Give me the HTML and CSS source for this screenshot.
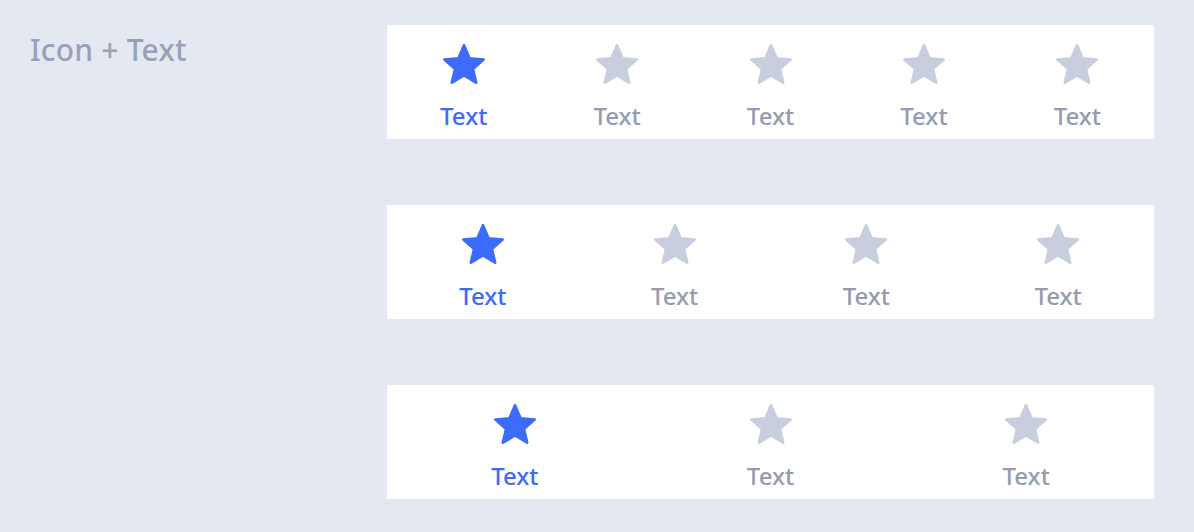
FILE: index.html
```html
<!DOCTYPE html>
<html>
<head>
<meta charset="utf-8">
<link rel="stylesheet" href="styles.css">
</head>
<body>
<svg width="0" height="0" class="defs">
  <defs>
    <symbol id="star" viewBox="1.3 1.3 21.4 20.4">
      <path d="M12 17.27L18.18 21l-1.64-7.03L22 9.24l-7.19-.61L12 2 9.19 8.63 2 9.24l5.46 4.73L5.82 21z" stroke-width="1.4" stroke-linejoin="round"/>
    </symbol>
  </defs>
</svg>
<main class="page">
  <div class="label">Icon + Text</div>
  <div class="bars">
    <nav class="bar">
      <div class="tab active"><svg class="icon"><use href="#star"/></svg><span>Text</span></div>
      <div class="tab"><svg class="icon"><use href="#star"/></svg><span>Text</span></div>
      <div class="tab"><svg class="icon"><use href="#star"/></svg><span>Text</span></div>
      <div class="tab"><svg class="icon"><use href="#star"/></svg><span>Text</span></div>
      <div class="tab"><svg class="icon"><use href="#star"/></svg><span>Text</span></div>
    </nav>
    <nav class="bar">
      <div class="tab active"><svg class="icon"><use href="#star"/></svg><span>Text</span></div>
      <div class="tab"><svg class="icon"><use href="#star"/></svg><span>Text</span></div>
      <div class="tab"><svg class="icon"><use href="#star"/></svg><span>Text</span></div>
      <div class="tab"><svg class="icon"><use href="#star"/></svg><span>Text</span></div>
    </nav>
    <nav class="bar">
      <div class="tab active"><svg class="icon"><use href="#star"/></svg><span>Text</span></div>
      <div class="tab"><svg class="icon"><use href="#star"/></svg><span>Text</span></div>
      <div class="tab"><svg class="icon"><use href="#star"/></svg><span>Text</span></div>
    </nav>
  </div>
</main>
</body>
</html>
```
FILE: styles.css
```css
html, body {
  margin: 0;
  padding: 0;
  background: #e4e8f1;
  font-family: "Noto Sans", "Open Sans", sans-serif;
}
.defs {
  position: absolute;
  width: 0;
  height: 0;
}
.page {
  display: flex;
  padding: 25px 40px 0 30px;
}
.label {
  width: 357px;
  flex: none;
  margin-top: 5px;
  font-size: 30px;
  line-height: 40px;
  font-weight: 500;
  letter-spacing: 0.2px;
  color: #99a1b7;
}
.bars {
  flex: 1;
  display: flex;
  flex-direction: column;
  gap: 66px;
}
.bar {
  height: 114px;
  box-sizing: border-box;
  background: #ffffff;
  display: flex;
  padding-top: 19px;
}
.tab {
  flex: 1;
  display: flex;
  flex-direction: column;
  align-items: center;
  color: #949bb2;
  fill: #c8cedd;
  stroke: #c8cedd;
}
.tab.active {
  color: #3d6bfb;
  fill: #3d6bfb;
  stroke: #3d6bfb;
}
.icon {
  width: 42px;
  height: 40px;
  display: block;
}
.tab span {
  margin-top: 16px;
  font-size: 24px;
  line-height: 32px;
  font-weight: 500;
}
```
